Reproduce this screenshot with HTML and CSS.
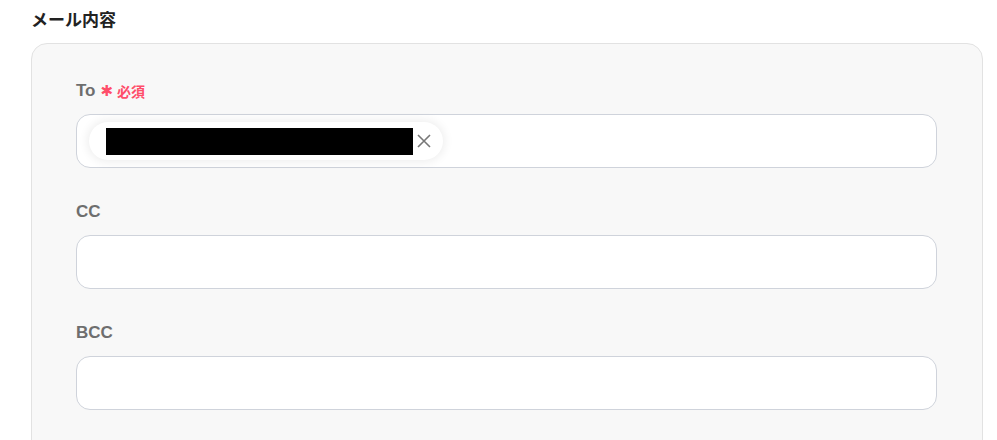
FILE: index.html
```html
<!DOCTYPE html>
<html lang="ja">
<head>
<meta charset="utf-8">
<link rel="stylesheet" href="styles.css">
</head>
<body>
<div class="page">
  <h2 class="title">メール内容</h2>
  <div class="panel">
    <div class="field">
      <div class="label">To <span class="req"><span class="ast">✱</span>必須</span></div>
      <div class="input input-to">
        <div class="chip">
          <span class="redact"></span>
          <svg class="x" width="16" height="16" viewBox="0 0 16 16"><path d="M2 2L14 14M14 2L2 14" stroke="#777" stroke-width="1.6" fill="none"/></svg>
        </div>
      </div>
    </div>
    <div class="field">
      <div class="label">CC</div>
      <div class="input"></div>
    </div>
    <div class="field">
      <div class="label">BCC</div>
      <div class="input"></div>
    </div>
  </div>
</div>
</body>
</html>
```

FILE: styles.css
```css
html, body {
  margin: 0;
  padding: 0;
  background: #ffffff;
}
body {
  font-family: "Liberation Sans", "Noto Sans CJK JP", sans-serif;
  color: #222;
  overflow: hidden;
}
.page {
  padding: 7px 14px 0 31px;
}
.title {
  margin: 0;
  font-family: "Noto Sans CJK JP", sans-serif;
  font-size: 17px;
  font-weight: 700;
  line-height: 24px;
  color: #222;
}
.panel {
  margin-top: 12px;
  background: #f8f8f8;
  border: 1px solid #e2e2e2;
  border-radius: 16px;
  padding: 36px 45px 40px 44px;
  display: flex;
  flex-direction: column;
  gap: 33px;
  height: 500px;
}
.field {
  display: flex;
  flex-direction: column;
  gap: 12px;
}
.label {
  font-size: 17px;
  font-weight: 700;
  line-height: 22px;
  color: #6e6e6e;
  display: flex;
  align-items: center;
  gap: 5px;
}
.req {
  color: #ff4d6a;
  font-family: "Noto Sans CJK JP", sans-serif;
  font-size: 14px;
  font-weight: 700;
  display: inline-flex;
  align-items: center;
  gap: 4px;
}
.ast {
  font-size: 15px;
  font-family: "DejaVu Sans", sans-serif;
}
.input {
  height: 52px;
  background: #ffffff;
  border: 1px solid #cfd3db;
  border-radius: 14px;
  display: flex;
  align-items: center;
  padding: 0 12px;
}
.chip {
  height: 38px;
  width: 354px;
  box-sizing: border-box;
  background: #ffffff;
  border-radius: 19px;
  box-shadow: 0 0 10px 2px rgba(0, 0, 0, 0.07);
  display: flex;
  align-items: center;
  padding-left: 17px;
  gap: 3px;
}
.redact {
  display: block;
  width: 307px;
  height: 27px;
  background: #000;
}
.x {
  display: block;
}
```
